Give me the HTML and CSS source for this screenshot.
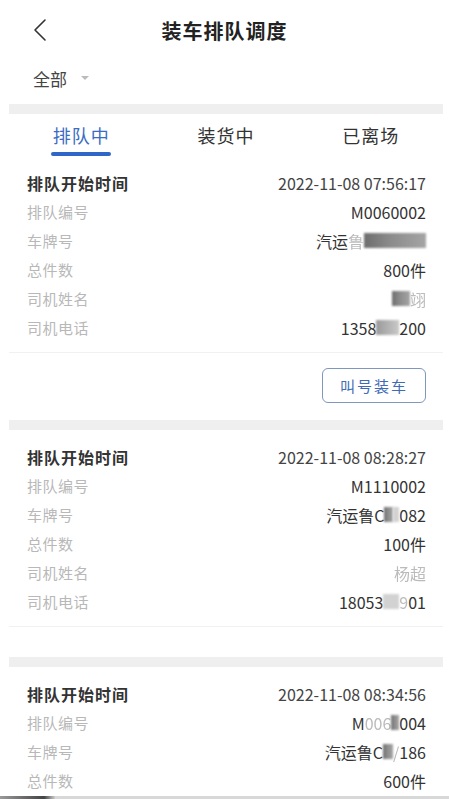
FILE: index.html
```html
<!DOCTYPE html>
<html lang="zh-CN">
<head>
    <meta charset="UTF-8">
    <meta name="viewport" content="width=device-width, initial-scale=1.0">
    <title>装车排队调度</title>
    <link rel="stylesheet" href="styles.css">
</head>
<body>
    <!-- 顶部导航 -->
    <div class="navbar">
        <div class="nav-left">
            <svg class="back" width="16" height="24" viewBox="0 0 16 24">
                <path d="M13 2 L3 12 L13 22" fill="none" stroke="#333" stroke-width="1.6" stroke-linecap="round" stroke-linejoin="round"/>
            </svg>
        </div>
        <div class="nav-title">装车排队调度</div>
        <div></div>
    </div>

    <div class="filter">
        <span>全部</span>
        <span class="caret"></span>
    </div>

    <div class="page">
        <div class="gap"></div>

        <div class="tabs">
            <div class="tab active">排队中<i></i></div>
            <div class="tab">装货中</div>
            <div class="tab">已离场</div>
        </div>

        <!-- 第一条 -->
        <div class="card">
            <div class="card-body">
                <div class="row head"><span class="label">排队开始时间</span><span class="value time">2022-11-08 07:56:17</span></div>
                <div class="row"><span class="label">排队编号</span><span class="value">M0060002</span></div>
                <div class="row"><span class="label">车牌号</span><span class="value">汽运<span class="fade">鲁</span><span class="mask w62"></span></span></div>
                <div class="row"><span class="label">总件数</span><span class="value">800件</span></div>
                <div class="row"><span class="label">司机姓名</span><span class="value"><span class="mask w18"></span><span class="fade">翊</span></span></div>
                <div class="row"><span class="label">司机电话</span><span class="value">1358<span class="mask light w23"></span>200</span></div>
            </div>
            <div class="card-foot">
                <button class="btn">叫号装车</button>
            </div>
        </div>

        <div class="gap"></div>

        <!-- 第二条 -->
        <div class="card">
            <div class="card-body">
                <div class="row head"><span class="label">排队开始时间</span><span class="value time">2022-11-08 08:28:27</span></div>
                <div class="row"><span class="label">排队编号</span><span class="value">M1110002</span></div>
                <div class="row"><span class="label">车牌号</span><span class="value">汽运鲁C<span class="mask w9"></span><span class="mask pale w6"></span>082</span></div>
                <div class="row"><span class="label">总件数</span><span class="value">100件</span></div>
                <div class="row"><span class="label">司机姓名</span><span class="value"><span class="fade">杨超</span></span></div>
                <div class="row"><span class="label">司机电话</span><span class="value">18053<span class="mask pale w16"></span><span class="fade">9</span>01</span></div>
            </div>
            <div class="card-foot empty"></div>
        </div>

        <div class="gap"></div>

        <!-- 第三条 -->
        <div class="card">
            <div class="card-body">
                <div class="row head"><span class="label">排队开始时间</span><span class="value time">2022-11-08 08:34:56</span></div>
                <div class="row"><span class="label">排队编号</span><span class="value">M<span class="fade">006</span><span class="mask w8"></span>004</span></div>
                <div class="row"><span class="label">车牌号</span><span class="value">汽运鲁C<span class="mask w10"></span><span class="fade">/</span>186</span></div>
                <div class="row"><span class="label">总件数</span><span class="value">600件</span></div>
            </div>
        </div>
    </div>

    <div class="bottom-line"><i></i></div>
</body>
</html>
```

FILE: styles.css
```css
:root {
    --primary-color: #2f66c8;
    --text-color: #333;
    --label-color: #b8b8b8;
    --gap-color: #efefef;
}

* {
    box-sizing: border-box;
    margin: 0;
    padding: 0;
}

body {
    font-family: "Noto Sans CJK SC", "Noto Sans", sans-serif;
    color: var(--text-color);
    background: #fff;
    width: 449px;
    overflow: hidden;
}

.navbar {
    display: grid;
    grid-template-columns: 1fr auto 1fr;
    align-items: center;
    height: 60px;
}

.nav-left {
    padding-left: 32px;
    display: flex;
    align-items: center;
}

.nav-title {
    font-size: 20px;
    font-weight: 700;
    letter-spacing: 1px;
    color: #222;
}

.filter {
    display: flex;
    align-items: center;
    height: 36px;
    padding-left: 33px;
    margin-bottom: 8px;
    font-size: 17px;
    color: #444;
}

.caret {
    margin-left: 14px;
    width: 0;
    height: 0;
    border-left: 4px solid transparent;
    border-right: 4px solid transparent;
    border-top: 4px solid #bbb;
}

.page {
    margin: 0 6px 0 9px;
}

.gap {
    height: 10px;
    background: var(--gap-color);
}

.tabs {
    display: grid;
    grid-template-columns: repeat(3, 1fr);
}

.tab {
    display: flex;
    flex-direction: column;
    align-items: center;
    padding-top: 9px;
    font-size: 18px;
    line-height: 24px;
    letter-spacing: 1px;
    color: #333;
}

.tab.active {
    color: #3a6cc2;
}

.tab i {
    display: block;
    width: 60px;
    height: 4px;
    margin-top: 5px;
    border-radius: 2px;
    background: var(--primary-color);
}

.card-body {
    padding: 12px 17px 10px 18px;
    border-bottom: 1px solid #f1f1f1;
}

.card:last-child .card-body {
    border-bottom: none;
}

.row {
    display: flex;
    justify-content: space-between;
    align-items: center;
    height: 29px;
}

.label {
    font-size: 15px;
    letter-spacing: 0.5px;
    color: var(--label-color);
}

.row.head .label {
    font-size: 16px;
    font-weight: 700;
    letter-spacing: 1px;
    color: #333;
}

.value {
    display: flex;
    align-items: center;
    font-size: 16px;
    color: var(--text-color);
}

.value.time {
    color: #444;
}

.fade {
    color: #bbb;
    filter: blur(0.6px);
}

.mask {
    display: inline-block;
    height: 15px;
    background: linear-gradient(90deg, #6d6d6d, #8a8a8a 40%, #a5a5a5);
    filter: blur(1px);
}

.mask.light {
    background: linear-gradient(90deg, #9a9a9a, #c9c9c9);
}

.mask.pale {
    background: #d2d2d2;
}

.w62 { width: 62px; }
.w23 { width: 23px; }
.w18 { width: 18px; }
.w16 { width: 16px; }
.w10 { width: 10px; }
.w9 { width: 9px; }
.w8 { width: 8px; }
.w6 { width: 6px; }

.card-foot {
    display: flex;
    justify-content: flex-end;
    padding: 15px 17px 17px;
}

.card-foot.empty {
    height: 30px;
    padding: 0;
}

.btn {
    width: 104px;
    height: 35px;
    border: 1px solid #7f96bd;
    border-radius: 6px;
    background: #fff;
    color: #3f6bb5;
    font-family: inherit;
    font-size: 15px;
    letter-spacing: 2px;
}

.bottom-line {
    position: fixed;
    left: 0;
    right: 0;
    bottom: 0;
    height: 3px;
    background: #d8d8d8;
}

.bottom-line i {
    display: block;
    width: 55px;
    height: 3px;
    background: linear-gradient(90deg, #9a9a9a, #444 80%, #ccc);
}
```
